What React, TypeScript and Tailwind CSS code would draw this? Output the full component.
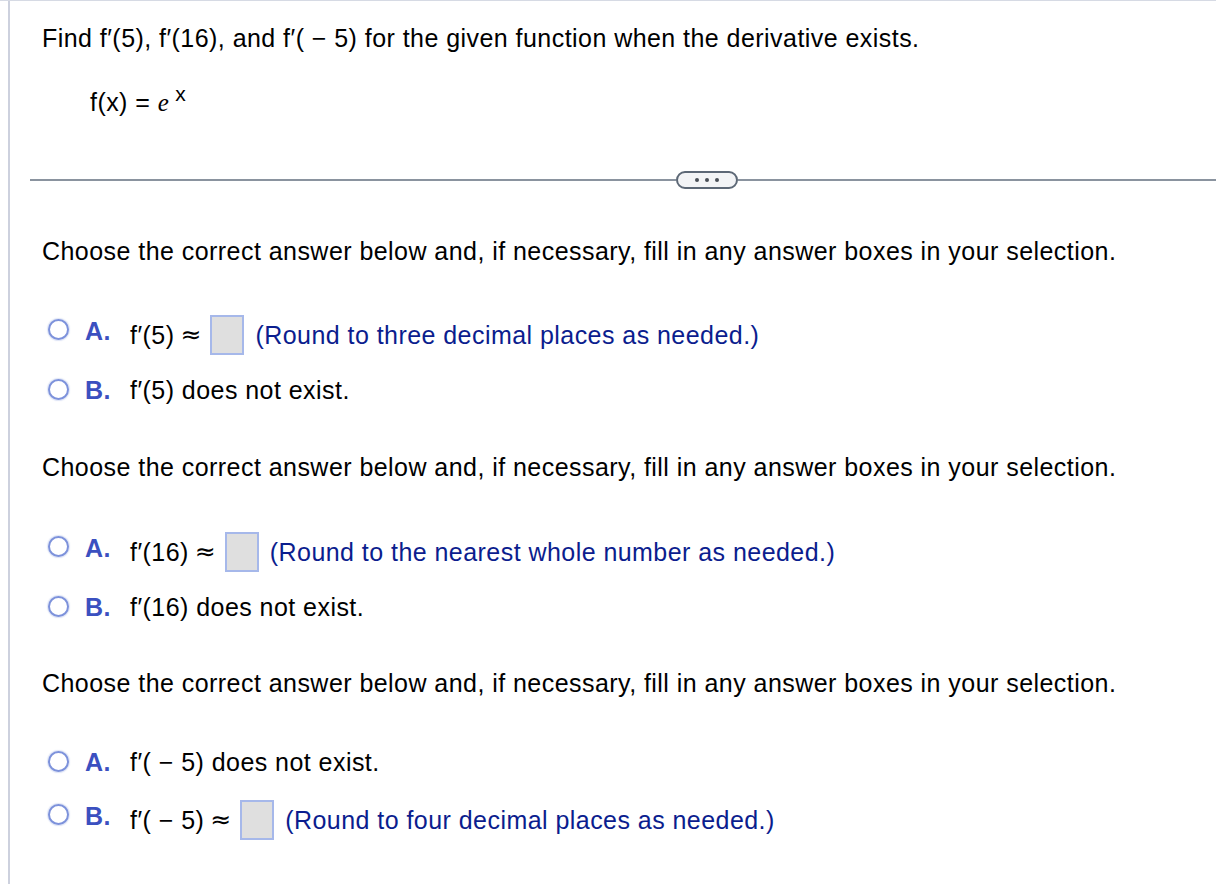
const font = { fontFamily: '"Liberation Sans", Arial, sans-serif' };
const approx = { fontFamily: '"DejaVu Sans", sans-serif' };

function Radio() {
  return (
    <span className="mt-[4px] block h-[21px] w-[21px] shrink-0 rounded-full border-2 border-[#7d92db] bg-white shadow-[0_0_1px_1px_rgba(125,146,219,0.25)]" />
  );
}

function AnswerBox() {
  return <span className="ml-[9px] inline-block h-10 w-[34px] border-2 border-[#a6b8ea] bg-[#dfdfdf]" />;
}

function Approx() {
  return (
    <span className="ml-[6px] text-[25px] tracking-normal" style={approx}>
      ≈
    </span>
  );
}

function Option({
  letter,
  children,
  boxed,
  className,
}: {
  letter: string;
  children: React.ReactNode;
  boxed?: boolean;
  className?: string;
}) {
  return (
    <div className={`flex items-start ${className ?? ''}`}>
      <div className="ml-[6px] mr-[16px]">
        <Radio />
      </div>
      <span className={`w-[45px] font-bold leading-[30px] text-[#3b50c0] ${boxed ? 'mt-[1px]' : ''}`}>{letter}</span>
      <div className={`flex items-center leading-[30px] ${boxed ? 'h-10' : ''}`}>{children}</div>
    </div>
  );
}

function Hint({ children }: { children: React.ReactNode }) {
  return <span className="ml-[11px] text-[#0b1d8e]">{children}</span>;
}

function Choose({ className }: { className?: string }) {
  return (
    <p className={`leading-[30px] ${className ?? ''}`}>
      Choose the correct answer below and, if necessary, fill in any answer boxes in your selection.
    </p>
  );
}

export default function App() {
  return (
    <div
      className="min-h-[884px] border-t border-[#d6dae4] bg-white text-[25px] tracking-[0.45px] text-black"
      style={font}
    >
      <div className="ml-2 min-h-[883px] border-l-2 border-[#cdd1de]">
        <div className="pl-[32px] pt-[22px]">
          <p className="leading-[30px]">
            Find f′(5), f′(16), and f′( − 5) for the given function when the derivative exists.
          </p>
          <p className="ml-[48px] mt-[34px] leading-[30px]">
            f(x) ={' '}
            <span className="italic" style={{ fontFamily: '"Liberation Serif", serif' }}>
              e
            </span>
            <span className="relative -top-[10px] ml-[6px] text-[21px]">x</span>
          </p>
        </div>

        <div className="ml-[20px] mt-[52px] flex h-[18px] items-center">
          <div className="h-[2px] w-[646px] bg-[#8a939f]" />
          <div className="flex h-[18px] w-[62px] items-center justify-center gap-[6px] rounded-full border-2 border-[#5d6876] bg-[#f3f4f6]">
            <span className="h-[4px] w-[4px] rounded-full bg-[#4a4f57]" />
            <span className="h-[4px] w-[4px] rounded-full bg-[#4a4f57]" />
            <span className="h-[4px] w-[4px] rounded-full bg-[#4a4f57]" />
          </div>
          <div className="h-[2px] flex-1 bg-[#8a939f]" />
        </div>

        <div className="pl-[32px]">
          <Choose className="mt-[47px]" />

          <Option letter="A." boxed className="mt-[49px]">
            <span>f′(5)</span>
            <Approx />
            <AnswerBox />
            <Hint>(Round to three decimal places as needed.)</Hint>
          </Option>
          <Option letter="B." className="mt-[20px]">
            <span>f′(5) does not exist.</span>
          </Option>

          <Choose className="mt-[47px]" />

          <Option letter="A." boxed className="mt-[50px]">
            <span>f′(16)</span>
            <Approx />
            <AnswerBox />
            <Hint>(Round to the nearest whole number as needed.)</Hint>
          </Option>
          <Option letter="B." className="mt-[20px]">
            <span>f′(16) does not exist.</span>
          </Option>

          <Choose className="mt-[46px]" />

          <Option letter="A." className="mt-[49px]">
            <span>f′( − 5) does not exist.</span>
          </Option>
          <Option letter="B." boxed className="mt-[23px]">
            <span>f′( − 5)</span>
            <Approx />
            <AnswerBox />
            <Hint>(Round to four decimal places as needed.)</Hint>
          </Option>
        </div>
      </div>
    </div>
  );
}
